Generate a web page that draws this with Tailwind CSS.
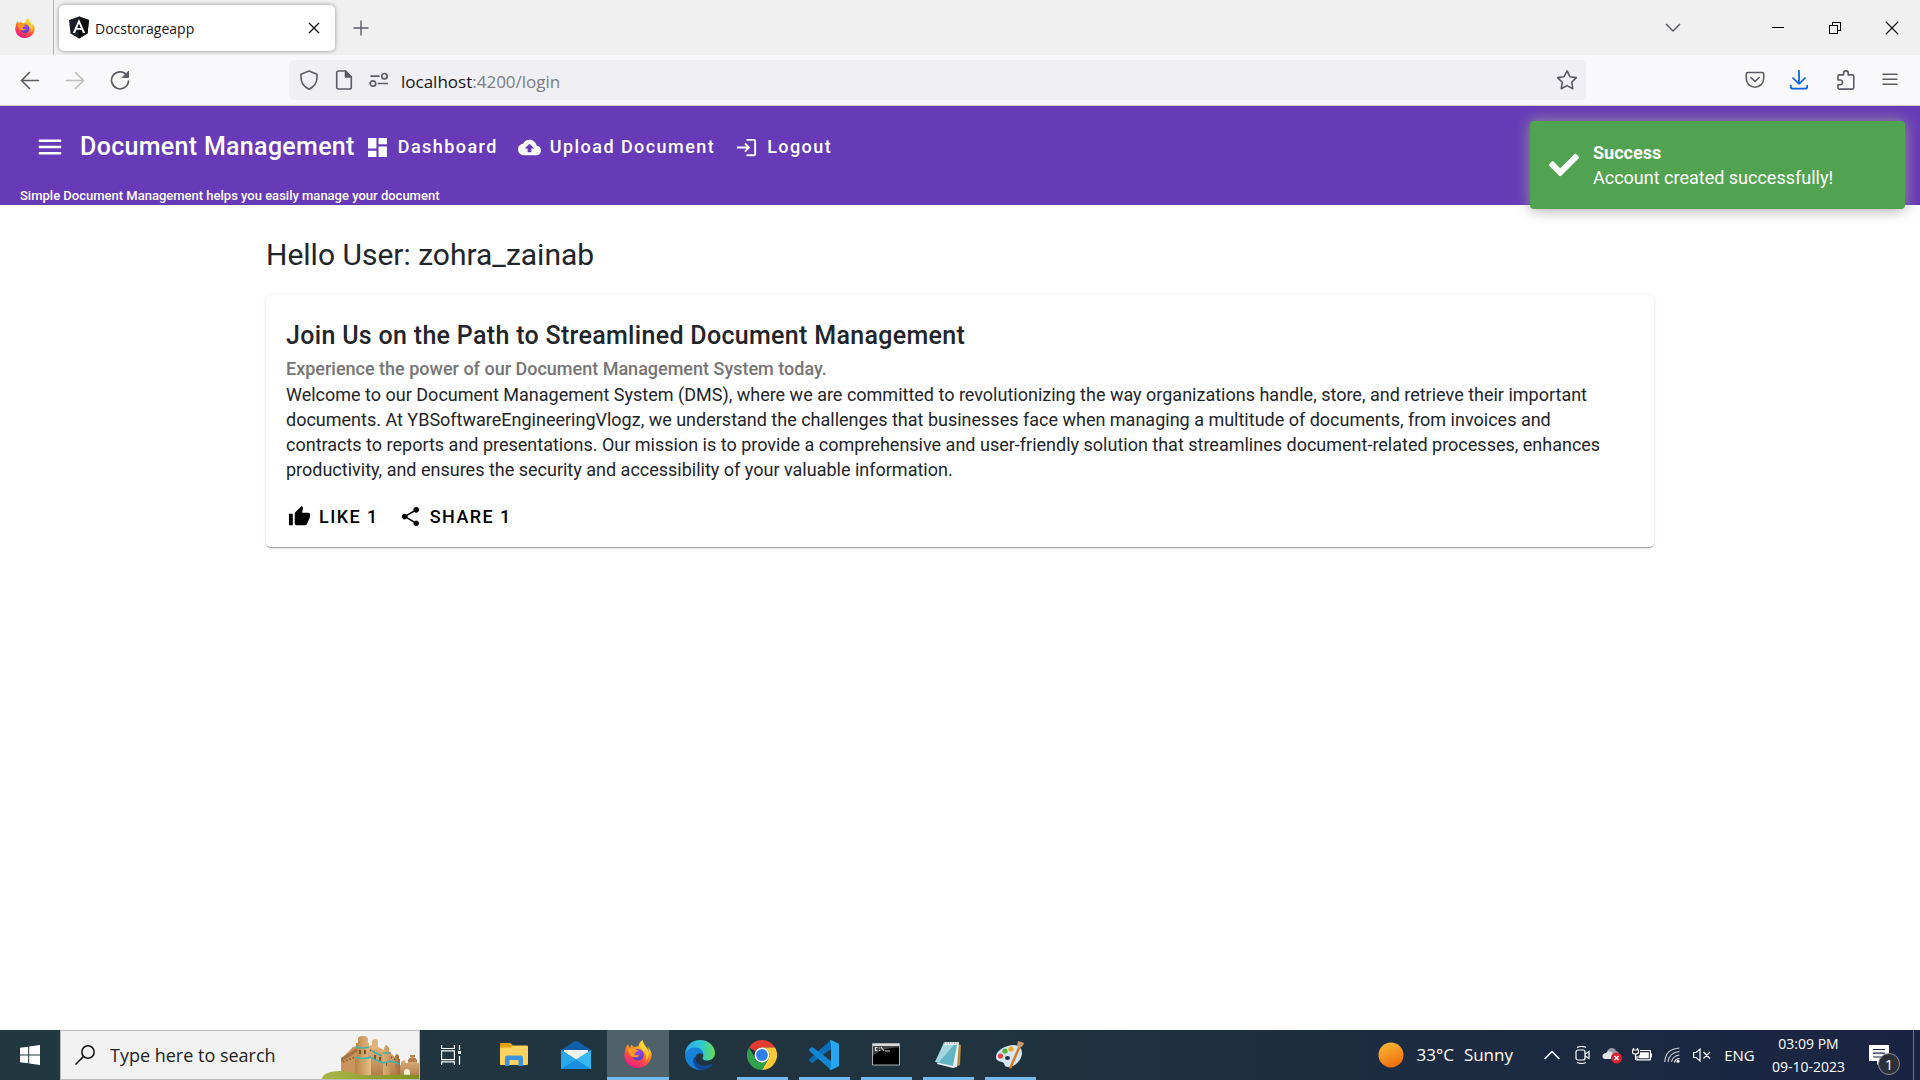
<!DOCTYPE html>
<html lang="en">
<head>
<meta charset="utf-8">
<title>Docstorageapp</title>
<script src="https://cdn.jsdelivr.net/npm/@tailwindcss/browser@4"></script>
</head>
<body class="min-h-screen flex flex-col bg-white font-['Roboto',sans-serif] text-[#212529]">

<!-- shared gradients and the Firefox logo -->
<svg width="0" height="0" class="absolute" aria-hidden="true">
  <defs>
    <linearGradient id="ffBody" x1="0.8" y1="0" x2="0.3" y2="1"><stop offset="0" stop-color="#fff44f"/><stop offset=".35" stop-color="#ffa71e"/><stop offset=".65" stop-color="#ff4f44"/><stop offset="1" stop-color="#f0148a"/></linearGradient>
    <radialGradient id="ffGlobe" cx=".6" cy=".3" r=".8"><stop offset="0" stop-color="#9b45f5"/><stop offset="1" stop-color="#4a3bc0"/></radialGradient>
    <symbol id="firefox" viewBox="0 0 32 32">
      <path fill="url(#ffBody)" d="M30.5 12.500c-.8-1.900-2.300-3.900-3.500-4.600 1 1.900 1.500 3.900 1.700 5.300C26.800 8.500 23 6.500 21.500 1c-.100-.3-.2-.6-.3-1-2.800 1.600-4.200 4.600-4.700 7-1.500.1-3 .5-4.300 1.100-1.700-.8-3.100-1.900-3.900-3.100-.7 1.300-.9 2.700-.8 3.900L6 8.200 4.700 4.800C2.500 7 1 10.400 1.100 13.500.4 15.200.2 17 .5 19 1.500 26.500 8 32 16 32c8.600 0 15.500-6.700 15.500-15.300 0-1.400-.3-2.900-1-4.200z"/>
      <circle cx="16" cy="17" r="6.800" fill="url(#ffGlobe)"/>
      <path fill="#ff9a1f" d="M4.500 10c2-1 4.500-.7 6 .5 1.500-.4 2.600-.2 3.500.5 1 .2 2.300.5 2.500.8 0 .9-2 1.500-2.800 2.200-.8.700-.5 1.800-1.900 2.200 1.700 1.600 3.800 1.500 6 .9-.8 1.700-3 3-5.500 2.700-4.500-.5-8-4.500-7.800-9.800z"/>
      <path fill="#ffd43a" d="M21.500 1c1 5.500 5.300 7.500 6.500 13 .8 4-1 7.500-3 9 1-3 .6-6.300-1.500-9-1.500-2-4.500-3-5.500-6.200.4-2.500 1.500-5 3.500-6.800z" opacity=".85"/>
    </symbol>
  </defs>
</svg>

<!-- tab strip -->
<div class="flex h-[55px] items-center bg-[#f0f0f0]">
  <button aria-label="Firefox View" class="flex h-full w-[54px] items-center justify-center border-r border-[#b4b4b8] pr-1"><svg class="size-5"><use href="#firefox"/></svg></button>
  <div class="ml-[5px] flex h-[46px] w-[276px] items-center rounded-[5px] bg-white pr-[14px] pl-[10px] shadow-[0_0_4px_rgba(0,0,0,0.4)]">
    <svg class="h-[23px] w-5" viewBox="0 0 20 22"><path fill="#1b1f27" d="M10 0l10 3.500-1.500 13.500L10 22l-8.500-5L0 3.500z"/><path fill="#0b0d12" d="M10 0l10 3.500-1.500 13.500L10 22z"/><path fill="#fff" d="M10 2.500L3.800 16.400h2.300l1.300-3.100h5.200l1.300 3.100h2.300zm0 4.400l1.800 4.500H8.200z"/></svg>
    <span class="ml-[6px] flex-1 pt-[2px] font-['Open_Sans',sans-serif] text-[14px] leading-5 text-[#15141a]">Docstorageapp</span>
    <button aria-label="Close tab"><svg class="size-[14px]" viewBox="0 0 14 14" stroke="#15141a" stroke-width="1.400"><path d="M2 2l10 10M12 2L2 12"/></svg></button>
  </div>
  <button aria-label="New tab" class="ml-[18px]"><svg class="size-4" viewBox="0 0 16 16" stroke="#5b5b66" stroke-width="1.400"><path d="M8 0.500v15M0.500 8h15"/></svg></button>
  <div class="ml-auto flex items-center">
    <button aria-label="List all tabs" class="flex w-14 justify-center"><svg class="h-[10px] w-4" viewBox="0 0 16 10" fill="none" stroke="#5b5b66" stroke-width="1.500"><path d="M1 1l7 7 7-7"/></svg></button>
    <button aria-label="Minimize" class="ml-12 flex w-[57px] justify-center"><svg class="h-3 w-3" viewBox="0 0 12 12" stroke="#000" shape-rendering="crispEdges"><path d="M0 5.500h12"/></svg></button>
    <button aria-label="Restore" class="flex w-[57px] justify-center"><svg class="size-3" viewBox="0 0 12 12" fill="none" stroke="#000" shape-rendering="crispEdges"><path d="M.5 3.500h8v8h-8zM3.500 3.500v-3h8v8h-3"/></svg></button>
    <button aria-label="Close window" class="flex w-[57px] justify-center"><svg class="size-[14px]" viewBox="0 0 14 14" stroke="#000" stroke-width="1.200"><path d="M.7.7l12.600 12.600M13.300.7L.7 13.300"/></svg></button>
  </div>
</div>

<!-- navigation toolbar -->
<div class="flex h-[51px] items-center border-b border-[#c9c9cf] bg-[#f9f9fb]">
  <div class="flex w-[289px] gap-[25px] pl-5">
    <button aria-label="Back"><svg class="size-5" viewBox="0 0 20 20" fill="none" stroke="#5b5b66" stroke-width="1.600" stroke-linecap="round"><path d="M18.500 10.500H1.500M9.500 2.500l-8 8 8 8"/></svg></button>
    <button aria-label="Forward"><svg class="size-5" viewBox="0 0 20 20" fill="none" stroke="#bcbcc2" stroke-width="1.600" stroke-linecap="round"><path d="M1.500 10.500h17M10.500 2.500l8 8-8 8"/></svg></button>
    <button aria-label="Reload"><svg class="size-5" viewBox="0 0 20 20" fill="none" stroke="#5b5b66" stroke-width="1.700" stroke-linecap="round"><path d="M17 5.500A8.500 8.500 0 1 0 18.500 11"/><path d="M18.500 1.500v6h-6z" fill="#5b5b66" stroke-width="1"/></svg></button>
  </div>
  <div class="flex h-10 flex-1 items-center rounded-[5px] bg-[#f0f0f4] pr-2 pl-[10px]">
    <svg class="size-5" viewBox="0 0 20 20" fill="none" stroke="#5b5b66" stroke-width="1.600" stroke-linejoin="round"><path d="M10 1l8 3.200v3.300c0 4.500-2.500 9-8 11.700C4.500 16.500 2 12 2 7.500V4.200z"/></svg>
    <svg class="ml-[15px] size-5" viewBox="0 0 20 20" fill="none" stroke="#5b5b66" stroke-width="1.600" stroke-linejoin="round"><path d="M11.500 1H4.500A1.800 1.800 0 0 0 2.700 2.800v14.400A1.800 1.800 0 0 0 4.500 19h11a1.800 1.800 0 0 0 1.800-1.800V7z"/><path d="M11.500 1v6h5.800z" fill="#5b5b66"/></svg>
    <svg class="ml-[15px] size-5" viewBox="0 0 20 20" fill="none" stroke="#5b5b66" stroke-width="1.700"><path d="M1.500 6.200h9M8.500 13.500H19"/><circle cx="15.500" cy="6.200" r="2.700"/><circle cx="4" cy="13.500" r="2.700"/></svg>
    <div class="ml-3 flex-1 pt-[3px] font-['Open_Sans',sans-serif] text-[17px] leading-6 text-[#7b7b85]"><span class="text-[#15141a]">localhost</span>:4200/login</div>
    <button aria-label="Bookmark this page"><svg class="size-[22px]" viewBox="0 0 22 22" fill="none" stroke="#5b5b66" stroke-width="1.600" stroke-linejoin="round"><path d="M11 1.800l2.900 5.900 6.500.9-4.700 4.600 1.100 6.500L11 16.600l-5.800 3.100 1.100-6.500L1.600 8.600l6.500-.9z"/></svg></button>
  </div>
  <div class="ml-[159px] flex gap-6 pr-[20px]">
    <button aria-label="Save to Pocket"><svg class="size-5" viewBox="0 0 20 20" fill="none" stroke="#5b5b66" stroke-width="1.600" stroke-linecap="round" stroke-linejoin="round"><path d="M2.800 2.500h14.400c.9 0 1.500.6 1.500 1.500v4.500A8.700 8.700 0 0 1 1.300 8.500V4c0-.9.6-1.500 1.500-1.500z"/><path d="M5.800 7.500L10 11.300l4.200-3.800"/></svg></button>
    <button aria-label="Downloads"><svg class="size-5" viewBox="0 0 20 20" fill="none" stroke="#0061e0" stroke-width="1.700" stroke-linecap="round" stroke-linejoin="round"><path d="M10 .8v13M4 8l6 6 6-6"/><path d="M1.800 15.500v1.200c0 1.200.8 2 2 2h12.400c1.200 0 2-.8 2-2v-1.200"/></svg></button>
    <button aria-label="Extensions"><svg class="ml-[3px] size-5" viewBox="0 0 20 20" fill="none" stroke="#5b5b66" stroke-width="1.600" stroke-linejoin="round"><path d="M2 10V6.500c0-1 .6-1.600 1.600-1.600h4V3.200a2.300 2.300 0 0 1 4.600 0v1.700h4c1 0 1.600.6 1.600 1.600v11c0 1-.6 1.600-1.600 1.600H3.600c-1 0-1.600-.6-1.600-1.600v-2.800h2.200a2.300 2.300 0 0 0 0-4.700z"/></svg></button>
    <button aria-label="Open application menu"><svg class="size-5" viewBox="0 0 20 20" stroke="#5b5b66" stroke-width="1.500"><path d="M2.500 4.200h15M2.500 9.200h15M2.500 14.200h15"/></svg></button>
  </div>
</div>

<!-- page content -->
<div class="relative flex flex-1 flex-col">
  <header class="bg-[#673ab7] pt-px font-medium text-white">
    <nav class="flex h-20 items-center pl-[35px]">
      <button aria-label="Menu"><svg class="size-[30px]" viewBox="0 0 24 24" fill="#fff"><path d="M3 18h18v-2H3v2zm0-5h18v-2H3v2zm0-7v2h18V6H3z"/></svg></button>
      <span class="ml-[15px] text-[25px] leading-8 tracking-[0.0125em]">Document Management</span>
      <div class="ml-[11px] flex gap-5 text-[18px] leading-6 tracking-[0.08em]">
        <a href="#" class="flex items-center gap-[9px]"><svg class="size-[23px]" viewBox="1 1 22 22" fill="#fff"><path d="M3 13h8V3H3v10zm0 8h8v-6H3v6zm10 0h8V11h-8v10zm0-18v6h8V3h-8z"/></svg>Dashboard</a>
        <a href="#" class="flex items-center gap-[9px]"><svg class="size-[23px]" viewBox="0 0 24 24" fill="#fff"><path d="M19.350 10.040C18.670 6.590 15.640 4 12 4 9.110 4 6.600 5.640 5.350 8.040 2.340 8.360 0 10.910 0 14c0 3.310 2.690 6 6 6h13c2.760 0 5-2.240 5-5 0-2.640-2.050-4.780-4.650-4.960zM14 13v4h-4v-4H7l5-5 5 5h-3z"/></svg>Upload Document</a>
        <a href="#" class="flex items-center gap-[9px]"><svg class="size-[23px]" viewBox="0 0 24 24" fill="#fff"><path d="M11 7L9.600 8.400l2.600 2.600H2v2h10.200l-2.600 2.600L11 17l5-5-5-5zm9 12h-8v2h8c1.100 0 2-.9 2-2V5c0-1.100-.9-2-2-2h-8v2h8v14z"/></svg>Logout</a>
      </div>
    </nav>
    <p class="px-5 text-[13px] leading-[18px]">Simple Document Management helps you easily manage your document</p>
  </header>

  <main class="mx-auto w-full max-w-[1388px] pt-[30px]">
    <h1 class="text-[30px] leading-10">Hello User: zohra_zainab</h1>
    <article class="mt-5 rounded-[5px] bg-white px-5 pt-[21px] pb-2 shadow-[0_2px_1px_-1px_rgba(0,0,0,0.2),0_1px_1px_0_rgba(0,0,0,0.14),0_1px_4px_0_rgba(0,0,0,0.12)]">
      <h2 class="text-[25px] leading-10 font-medium tracking-[0.0125em]">Join Us on the Path to Streamlined Document Management</h2>
      <h3 class="text-[18px] leading-[26px] font-medium text-[#757575]">Experience the power of our Document Management System today.</h3>
      <p class="pr-5 text-[18px] leading-[25px]">Welcome to our Document Management System (DMS), where we are committed to revolutionizing the way organizations handle, store, and retrieve their important documents. At YBSoftwareEngineeringVlogz, we understand the challenges that businesses face when managing a multitude of documents, from invoices and contracts to reports and presentations. Our mission is to provide a comprehensive and user-friendly solution that streamlines document-related processes, enhances productivity, and ensures the security and accessibility of your valuable information.</p>
      <div class="mt-3 flex gap-5 text-[18px] font-medium tracking-[0.08em] text-black">
        <button class="flex h-[45px] items-center gap-2 pl-[2px]"><svg class="size-[23px]" viewBox="0 0 24 24"><path d="M1 21h4V9H1v12zm22-11c0-1.100-.9-2-2-2h-6.310l.95-4.570.03-.32c0-.41-.17-.79-.44-1.060L14.170 1 7.590 7.590C7.220 7.950 7 8.450 7 9v10c0 1.100.9 2 2 2h9c.83 0 1.540-.5 1.840-1.220l3.020-7.050c.09-.23.14-.47.14-.73v-2z"/></svg>LIKE 1</button>
        <button class="flex h-[45px] items-center gap-2"><svg class="size-[23px]" viewBox="0 0 24 24"><path d="M18 16.080c-.76 0-1.440.3-1.960.77L8.910 12.700c.05-.23.09-.46.09-.7s-.04-.47-.09-.7l7.050-4.110c.54.5 1.250.81 2.040.81 1.660 0 3-1.340 3-3s-1.340-3-3-3-3 1.340-3 3c0 .24.04.47.09.7L8.040 9.810C7.500 9.310 6.790 9 6 9c-1.660 0-3 1.340-3 3s1.340 3 3 3c.79 0 1.500-.31 2.040-.81l7.120 4.160c-.05.21-.08.43-.08.65 0 1.610 1.310 2.920 2.920 2.920s2.920-1.310 2.920-2.920-1.310-2.920-2.920-2.920z"/></svg>SHARE 1</button>
      </div>
    </article>
  </main>

  <div role="status" class="absolute top-[15px] right-[15px] flex h-[88px] w-[375px] items-center rounded-[4px] bg-[#51a351] pl-[19px] text-[18px] leading-[25px] text-white shadow-[0_0_15px_#999]">
    <svg class="size-[30px]" viewBox="0 0 512 512" fill="#fff"><path d="M173.900 439.400l-166.400-166.400c-10-10-10-26.200 0-36.200l36.200-36.200c10-10 26.200-10 36.200 0L192 312.700 432.100 72.600c10-10 26.200-10 36.200 0l36.200 36.200c10 10 10 26.200 0 36.200l-294.400 294.400c-10 10-26.200 10-36.200 0z"/></svg>
    <div class="ml-[14px]"><div class="font-bold">Success</div><div>Account created successfully!</div></div>
  </div>
</div>

<!-- taskbar -->
<footer class="flex h-[50px] items-stretch bg-linear-to-r from-[#213841] via-[#20333f] to-[#192442] font-['Open_Sans',sans-serif] text-white">
  <button aria-label="Start" class="flex w-[60px] items-center justify-center"><svg class="size-5" viewBox="0 0 20 20" fill="#fff"><path d="M0 2.800l8.200-1.100v7.800H0zM9.200 1.500L20 0v9.500H9.200zM0 10.500h8.200v7.800L0 17.200zM9.200 10.500H20V20L9.200 18.500z"/></svg></button>
  <label class="flex w-[360px] items-center overflow-hidden border border-[#bbb] bg-[#f2f2f2] pl-[14px]">
    <svg class="size-5 shrink-0" viewBox="0 0 20 20" fill="none" stroke="#111" stroke-width="1.500"><circle cx="13" cy="7" r="6.200"/><path d="M8.600 11.400L.5 19.500"/></svg>
    <input type="text" aria-label="Search" placeholder="Type here to search" class="ml-[15px] w-[210px] bg-transparent text-[18px] text-[#222] placeholder:text-[#222]">
    <svg class="ml-auto h-[48px] w-[97px] shrink-0 self-end" viewBox="0 0 97 48">
      <defs>
        <linearGradient id="stone" x1="0" x2="1"><stop offset="0" stop-color="#b98245"/><stop offset=".45" stop-color="#f3cf95"/><stop offset="1" stop-color="#a56b3a"/></linearGradient>
        <linearGradient id="wall" x1="0" y1="0" x2="0" y2="1"><stop offset="0" stop-color="#e2b780"/><stop offset="1" stop-color="#b07a48"/></linearGradient>
        <linearGradient id="grass" x1="0" x2="1"><stop offset="0" stop-color="#a8b84a"/><stop offset="1" stop-color="#7f8f1c"/></linearGradient>
      </defs>
      <!-- gatehouse on the right -->
      <path fill="url(#wall)" d="M76 34h3v-3l3-2 2 3h2v-3a5 5 0 0 1 9 0v3h2v14H76z"/>
      <path fill="#b57f4a" d="M86 29a5 5 0 0 1 9 0v2h-9zM88 24h5v2h-5z"/>
      <path fill="#fff1d8" d="M82 46v-5a3 3 0 0 1 6 0v5z"/>
      <!-- curtain wall -->
      <path fill="#c9955c" d="M19 28l12-12 4-1v31H19z"/>
      <path fill="url(#wall)" d="M46 15l7-2 3 3 6 3v-2l6 4 6 6 3 3v16H46z"/>
      <path fill="#a87443" d="M19 27l16-10v4L19 31z"/>
      <path fill="none" stroke="#7c522b" stroke-width="1.500" stroke-dasharray="1.500 2" d="M21 31l12-5M48 19l12 6M69 26l7 4"/>
      <path fill="#dfb27a" d="M50 11a3 3 0 0 1 6 0v6h-6z"/>
      <!-- round towers -->
      <path fill="url(#stone)" d="M36 8q0-3 5-3t5 3v5H36zM34 12h13v5H34zM35 17h11v12H35zM33 27h16v17q-8 3-16 0zM62 17q2-6 5 0v4h2v23H61V21h1zM73 25q2-4 4 0v3h1v16h-5z"/>
      <path fill="#7c522b" d="M37 19h2v4h-2zM42 19h2v4h-2zM52 24h2v4h-2zM57 26h2v4h-2zM64 31h1v4h-1z"/>
      <path fill="none" stroke="#3fb3b1" stroke-width="1.500" d="M34 16q7 2 13 0M33 26q8 3 16 0M49 27l12 5 8-2 8 3M50 20l10 5M61 22h7"/>
      <path fill="url(#grass)" d="M0 48c0-5 8-8 18-8 9 0 13 3 24 4s30-1 55 0v4z"/>
    </svg>
  </label>
  <button aria-label="Task view" class="flex w-[62px] items-center justify-center"><svg class="size-5" viewBox="0 0 20 20" fill="none" stroke="#fff" stroke-width="1.200"><path d="M.6 0v3.500h12.800V0M.6 5.800h12.800v8.800H.6zM.6 20v-3.200h12.800V20M18.500 0v5M18.500 11v9"/><path d="M17 6h3v3h-3z" fill="#fff" stroke="none"/></svg></button>

  <div class="flex pl-px">
    <button aria-label="File Explorer" class="flex w-[62px] items-center justify-center"><svg class="size-7" viewBox="0 0 28 28"><path fill="#e3a008" d="M0 3q0-1 1-1h9.500l2.500 2.500V8H0z"/><path fill="#ffd25e" d="M0 6.500h10.500L13 4.500h14q1 0 1 1V23q0 1-1 1H1q-1 0-1-1z"/><path fill="#3d94de" d="M5 25V16.500q0-2 2-2h14q2 0 2 2V25h-4.500v-6h-9v6z"/></svg></button>
    <button aria-label="Mail" class="flex w-[62px] items-center justify-center"><svg class="size-[30px]" viewBox="0 0 30 30"><path fill="#0f5ea8" d="M0 10L13 1.500q2-1.200 4 0L30 10v4H0z"/><path fill="#f3f3f3" d="M3 10h24v10H3z"/><path fill="#35b8f1" d="M0 10l15 9.500L30 10v19H0z"/><path fill="#1a8fdd" d="M0 10l30 19H0z"/><path fill="#28a8ea" d="M0 10v19l15-9.500z"/></svg></button>
    <button aria-label="Firefox" class="flex w-[62px] flex-col items-center justify-between bg-[#4f6169] pt-[10px]"><svg class="size-7"><use href="#firefox"/></svg><span class="h-[3px] w-full bg-[#76b9ed]"></span></button>
    <button aria-label="Microsoft Edge" class="flex w-[62px] items-center justify-center"><svg class="size-[30px]" viewBox="0 0 30 30"><defs><linearGradient id="edgeTop" x1="0" x2="1"><stop offset="0" stop-color="#2ba9ea"/><stop offset=".55" stop-color="#2fc8d3"/><stop offset="1" stop-color="#68dd4e"/></linearGradient></defs><path fill="url(#edgeTop)" d="M0 15C0 6 7 0 15 0c9 0 15 6.500 15 13 0 5-4 7.500-8 7.500-3.500 0-5-1.300-4.500-2.400 2-2.600.5-6.600-4-7.100C7 10 1 12 0 15z"/><path fill="#1682d8" d="M0 15c1-5 5.500-7.500 10-7.500 6 0 9 4 8.500 8-1-2.500-4.500-3.500-7-.5-4 5 .5 13 9.500 13.500C10 33 0 25 0 15z"/><path fill="#114a9c" d="M10.800 16c-2.300 6 4 10.500 10 9.800 3-.4 5-1.500 6.300-2.200.5-.2.900.2.600.7C25.500 27.500 21 30 17 30c-9-1-11.500-11-6.200-14z"/></svg></button>
    <button aria-label="Google Chrome" class="flex w-[62px] flex-col items-center justify-between pt-[10px]"><svg class="size-[30px]" viewBox="0 0 30 30"><path fill="#e33b2e" d="M15 0a15 15 0 0 1 13 7.500H15a7.500 7.500 0 0 0-6.500 3.750L2 7.500A15 15 0 0 1 15 0z"/><path fill="#fcc934" d="M28 7.500A15 15 0 0 1 15 30l6.500-11.250A7.500 7.500 0 0 0 21.500 11.250L15 7.500z"/><path fill="#2da14c" d="M2 7.500A15 15 0 0 0 15 30l6.500-11.250A7.500 7.500 0 0 1 8.500 18.750z"/><circle cx="15" cy="15" r="7.500" fill="#fff"/><circle cx="15" cy="15" r="5.900" fill="#2f7de9"/></svg><span class="h-[3px] w-[51px] bg-[#76b9ed]"></span></button>
    <button aria-label="Visual Studio Code" class="flex w-[62px] flex-col items-center justify-between pt-[10px]"><svg class="size-[30px]" viewBox="0 0 30 30"><path fill="#0b6fb8" d="M22 0v9L4 22.500q-1 .7-1.800 0L.5 21q-1-1 0-2z"/><path fill="#1287d4" d="M22 30v-9L4 7.500q-1-.7-1.800 0L.5 9q-1 1 0 2z"/><path fill="#27a5f0" d="M22 0l7 3.200q1 .5 1 1.700v20.200q0 1.200-1 1.700L22 30q-.8 0-1.200-.6L22 27V3L20.800.600Q21.300 0 22 0z"/></svg><span class="h-[3px] w-[51px] bg-[#76b9ed]"></span></button>
    <button aria-label="Command Prompt" class="flex w-[62px] flex-col items-center justify-between pt-[10px]"><svg class="h-[30px] w-7" viewBox="0 0 28 30"><path fill="#000" stroke="#aab0b3" d="M.5 3.500h27v21.500H.5z"/><path fill="#d6dadb" d="M1 4h26v2H1z"/><path fill="#444" d="M1 6h26v1.500C14 8 5 11 1 16z"/><path stroke="#ddd" stroke-width="1.200" fill="none" d="M5.500 7.500H3.500v3h2M7.500 7.500v1M7.500 10v1M9 7l3 4M13 11h5"/></svg><span class="h-[3px] w-[51px] bg-[#76b9ed]"></span></button>
    <button aria-label="Notepad" class="flex w-[62px] flex-col items-center justify-between pt-[10px]"><svg class="size-[30px]" viewBox="0 0 30 30"><path fill="#b58a3c" d="M25 4l3 1-1 20-4 2z"/><path fill="#e9eef0" d="M11 2h15l-2 25-4 1L4 24z"/><path fill="#63b5c4" d="M10 5h14l-4 21L2 22z"/><path fill="#b9e3ea" d="M10 5h11L6 22l-4 0z" opacity=".75"/><path stroke="#899" stroke-width="1.500" stroke-dasharray="1 1.500" d="M11 3h15"/></svg><span class="h-[3px] w-[51px] bg-[#76b9ed]"></span></button>
    <button aria-label="Paint" class="flex w-[62px] flex-col items-center justify-between pt-[10px]"><svg class="size-[30px]" viewBox="0 0 30 30"><path fill="#d4e6f3" d="M13 6c8-3 14 1 14 7 0 7-7 14-14 14-4 0-3-3-5-4.500S1 22 1 17C1 12 6 8 13 6z"/><ellipse cx="12.500" cy="18" rx="2.500" ry="2" fill="#21323e"/><circle cx="5.500" cy="16" r="2.600" fill="#e04343"/><circle cx="10" cy="11" r="2.600" fill="#55b32f"/><circle cx="16" cy="9" r="2.600" fill="#f3a51c"/><path fill="none" stroke="#d97a20" stroke-width="2.500" stroke-linecap="round" d="M15.500 27.500L24 8"/><path fill="#c99a6b" d="M22 6l1-5q4 1 6 2-1 4-5 5z"/></svg><span class="h-[3px] w-[51px] bg-[#76b9ed]"></span></button>
  </div>

  <button class="ml-auto flex items-center pr-6 text-[17px]"><svg class="mr-3 size-[26px]" viewBox="0 0 26 26"><defs><linearGradient id="sun" x1=".3" y1="0" x2=".7" y2="1"><stop offset="0" stop-color="#f7b733"/><stop offset="1" stop-color="#f26a0d"/></linearGradient></defs><circle cx="13" cy="13" r="12.500" fill="url(#sun)"/></svg><span class="mr-[10px]">33°C</span><span>Sunny</span></button>
  <div class="flex items-center">
    <button aria-label="Show hidden icons" class="flex w-[30px] justify-center"><svg class="h-[10px] w-4" viewBox="0 0 16 10" fill="none" stroke="#fff" stroke-width="1.400"><path d="M.7 9L8 1.500 15.300 9"/></svg></button>
    <button aria-label="Meet Now" class="flex w-[30px] justify-center"><svg class="size-[18px]" viewBox="0 0 18 18" fill="none" stroke="#fff" stroke-width="1.200"><rect x="3" y="4" width="9" height="10" rx="2"/><path d="M12 8l4-2.500v7L12 10M4 1.500Q8.500-.5 13 1.500M4 16.500q4.500 2 9 0"/></svg></button>
    <button aria-label="OneDrive" class="flex w-[30px] justify-center"><svg class="h-[18px] w-5" viewBox="0 0 20 18"><path fill="#9a9ea6" d="M5 6c1-5 8-5 9-1 3 0 3 3 3 4H5z"/><path fill="#e0e3e6" d="M3 13c-4-1-3-6 1-6 2-3 6-2 7 1l-1 5z"/><circle cx="14.500" cy="12" r="5.500" fill="#d9202e"/><path stroke="#fff" stroke-width="1.500" d="M12.500 10l4 4M16.500 10l-4 4"/></svg></button>
    <button aria-label="Battery" class="flex w-[30px] justify-center"><svg class="h-4 w-5" viewBox="0 0 20 16" fill="none" stroke="#fff" stroke-width="1.200"><path d="M8 3.500h10.400v9.400H5V9M19.400 6.500v4"/><path d="M8 5.200h8.800v6H6.500V9L8 7.500z" fill="#fff" stroke="none"/><path d="M1.500 1v2M5.500 1v2M.5 3h6v2q0 2-3 2t-3-2zM3.500 7v6"/></svg></button>
    <button aria-label="Network" class="flex w-[30px] justify-center"><svg class="size-4" viewBox="0 0 16 16" fill="none" stroke="#fff" stroke-width="1.200"><path d="M.8 15Q1.500 1.800 15.500 1M4 15Q5 5.500 15.500 4.500M7.500 15Q8.500 9 15.500 8" opacity=".75"/><path d="M10.500 15.500q.5-3.500 5-4"/><circle cx="14" cy="14.200" r="1.500" fill="#fff" stroke="none"/></svg></button>
    <button aria-label="Volume muted" class="flex w-[30px] justify-center"><svg class="h-4 w-[18px]" viewBox="0 0 18 16" fill="none" stroke="#fff" stroke-width="1.200"><path d="M.6 5.500h2.500L7 2v12l-3.900-3.500H.6zM10.500 5l6.500 6.500M17 5l-6.500 6.500"/></svg></button>
    <button class="w-[45px] text-center text-[15px]">ENG</button>
    <button class="w-[93px] text-center text-[14px] leading-[23px]">03:09 PM<br>09-10-2023</button>
    <button aria-label="Notifications" class="relative flex w-[58px] justify-center"><svg class="mr-[10px] h-[22px] w-5" viewBox="0 0 20 22"><path fill="#fff" d="M0 1h20v16H12l-4 4v-4H0z"/><path stroke="#1a2742" stroke-width="1.200" d="M4 5.500h12M4 9.200h12M4 13h8"/></svg><span class="absolute top-[9px] right-[13px] flex size-[22px] items-center justify-center rounded-full border border-[#8b8f98] bg-[#2c3038] text-[15px] leading-none">1</span></button>
    <button aria-label="Show desktop" class="h-[50px] w-[7px] border-l border-[#6f7687]"></button>
  </div>
</footer>
</body>
</html>
